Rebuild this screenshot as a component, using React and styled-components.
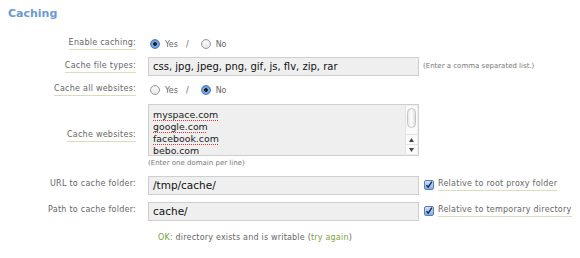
import React from 'react'
import styled, { createGlobalStyle } from 'styled-components'

const GlobalStyle = createGlobalStyle`
  body {
    margin: 0;
    background: #fff;
    font-family: 'DejaVu Sans', Verdana, sans-serif;
  }
`

const Page = styled.div`
  width: 580px;
  height: 258px;
  padding: 8px 0 0 8px;
  box-sizing: border-box;
`

const Title = styled.div`
  font-size: 11px;
  font-weight: bold;
  color: #6a98d6;
  line-height: 12px;
`

const Form = styled.div`
  display: flex;
  flex-direction: column;
  margin-top: 14px;
  margin-left: -8px;
`

const Row = styled.div`
  display: flex;
  align-items: center;
  min-height: ${p => p.$h || 20}px;
  margin-top: ${p => p.$mt || 0}px;
`

const LabelCell = styled.div`
  width: 136px;
  flex: none;
  display: flex;
  justify-content: flex-end;
  margin-right: 12px;
`

const Label = styled.span`
  font-size: 8px;
  letter-spacing: 0.25px;
  color: #666;
  line-height: 10px;
  padding-bottom: 1px;
  border-bottom: 1px solid ${p => (p.$plain ? 'transparent' : '#dedbbd')};
`

const Field = styled.div`
  display: flex;
  align-items: center;
`

const Column = styled.div`
  display: flex;
  flex-direction: column;
`

const Choice = styled.span`
  display: inline-flex;
  align-items: center;
  font-size: 8px;
  color: #666;
  gap: 5px;
`

const Slash = styled.span`
  font-size: 8px;
  color: #666;
  margin: 0 10px 0 8px;
`

const RadioDot = styled.span`
  width: 10px;
  height: 10px;
  border-radius: 50%;
  box-sizing: border-box;
  margin-left: 2px;
  border: 1px solid ${p => (p.$on ? '#5a7fb0' : '#9a9a9a')};
  background: ${p =>
    p.$on
      ? 'radial-gradient(circle at 50% 50%, #222 0 1.6px, #7fb2ee 2.2px, #3d7fd0 100%)'
      : 'linear-gradient(#fdfdfd, #e6e6e6)'};
  box-shadow: inset 0 1px 1px rgba(0, 0, 0, 0.08);
`

const TextBox = styled.div`
  width: 271px;
  height: 19px;
  box-sizing: border-box;
  background: #efefef;
  border: 1px solid #cfcfcf;
  padding: 0 4px;
  font-size: ${p => p.$size || 10}px;
  line-height: 17px;
  color: #111;
  white-space: nowrap;
  overflow: hidden;
`

const Hint = styled.span`
  font-size: 7px;
  color: #777;
  margin-left: ${p => p.$ml || 0}px;
  margin-top: ${p => p.$mt || 0}px;
  line-height: 9px;
`

const Area = styled.div`
  width: 271px;
  height: 52px;
  box-sizing: border-box;
  background: #efefef;
  border: 1px solid #cfcfcf;
  display: flex;
  overflow: hidden;
`

const Lines = styled.div`
  flex: 1;
  padding: 4px 0 0 4px;
  font-size: 9.4px;
  line-height: 12px;
  color: #222;
`

const Domain = styled.div`
  span {
    text-decoration: ${p => (p.$typo ? 'underline dotted #d33' : 'none')};
    text-underline-offset: 2px;
  }
`

const Scroll = styled.div`
  width: 11px;
  margin: 1px 1px 1px 0;
  background: #fafafa;
  border-left: 1px solid #e2e2e2;
  display: flex;
  flex-direction: column;
  align-items: center;
`

const Thumb = styled.div`
  width: 9px;
  height: 22px;
  margin-top: 2px;
  border-radius: 5px;
  border: 1px solid #c4c4c4;
  background: linear-gradient(90deg, #e8e8e8, #fff 50%, #dcdcdc);
  box-sizing: border-box;
`

const Arrow = styled.div`
  width: 11px;
  height: 10px;
  display: flex;
  align-items: center;
  justify-content: center;
  border-top: 1px solid #e2e2e2;
  margin-top: ${p => p.$mt || 0}px;
`

const Check = styled.span`
  width: 10px;
  height: 10px;
  flex: none;
  box-sizing: border-box;
  border: 1px solid #5a7fb0;
  border-radius: 2px;
  background: linear-gradient(#cfe2fa, #7fb0e8);
  display: inline-flex;
  align-items: center;
  justify-content: center;
  margin: 0 4px 0 5px;
`

const Note = styled.span`
  font-size: 8px;
  letter-spacing: 0.2px;
  color: #666;
  margin-left: 10px;
`

const Ok = styled.span`
  color: ${p => p.$color || '#7aa23a'};
`

function Radio({ on, children }) {
  return (
    <Choice>
      <RadioDot $on={on} />
      {children}
    </Choice>
  )
}

function Tick() {
  return (
    <svg width="10" height="10" viewBox="0 0 10 10">
      <path d="M1.8 5.2 L4 7.6 L8.6 0.8" fill="none" stroke="#1a2a55" strokeWidth="1.8" />
    </svg>
  )
}

function Tri({ up }) {
  return (
    <svg width="5" height="4" viewBox="0 0 5 4">
      <path d={up ? 'M2.5 0 L5 4 L0 4 Z' : 'M0 0 L5 0 L2.5 4 Z'} fill="#444" />
    </svg>
  )
}

const domains = ['myspace.com', 'google.com', 'facebook.com', 'bebo.com']

export default function App() {
  return (
    <Page>
      <GlobalStyle />
      <Title>Caching</Title>
      <Form>
        <Row $h={20}>
          <LabelCell><Label>Enable caching:</Label></LabelCell>
          <Field>
            <Radio on>Yes</Radio>
            <Slash>/</Slash>
            <Radio>No</Radio>
          </Field>
        </Row>
        <Row $h={19} $mt={3}>
          <LabelCell><Label>Cache file types:</Label></LabelCell>
          <Field>
            <TextBox>css, jpg, jpeg, png, gif, js, flv, zip, rar</TextBox>
            <Hint $ml={4}>(Enter a comma separated list.)</Hint>
          </Field>
        </Row>
        <Row $h={20} $mt={4}>
          <LabelCell><Label>Cache all websites:</Label></LabelCell>
          <Field>
            <Radio>Yes</Radio>
            <Slash>/</Slash>
            <Radio on>No</Radio>
          </Field>
        </Row>
        <Row $mt={4}>
          <LabelCell><Label>Cache websites:</Label></LabelCell>
          <Column>
            <Area>
              <Lines>
                {domains.map((d, i) => (
                  <Domain key={d} $typo={i < 3}><span>{d}</span></Domain>
                ))}
              </Lines>
              <Scroll>
                <Thumb />
                <Arrow $mt={6}><Tri up /></Arrow>
                <Arrow><Tri /></Arrow>
              </Scroll>
            </Area>
            <Hint $mt={3}>(Enter one domain per line)</Hint>
          </Column>
        </Row>
        <Row $h={20} $mt={7}>
          <LabelCell><Label $plain>URL to cache folder:</Label></LabelCell>
          <Field>
            <TextBox $size={10.5}>/tmp/cache/</TextBox>
            <Check><Tick /></Check>
            <Label>Relative to root proxy folder</Label>
          </Field>
        </Row>
        <Row $h={20} $mt={6}>
          <LabelCell><Label $plain>Path to cache folder:</Label></LabelCell>
          <Field>
            <TextBox $size={10.5}>cache/</TextBox>
            <Check><Tick /></Check>
            <Label>Relative to temporary directory</Label>
          </Field>
        </Row>
        <Row $h={18} $mt={7}>
          <LabelCell />
          <Note>
            <Ok>OK:</Ok> directory exists and is writable (<Ok>try again</Ok>)
          </Note>
        </Row>
      </Form>
    </Page>
  )
}
